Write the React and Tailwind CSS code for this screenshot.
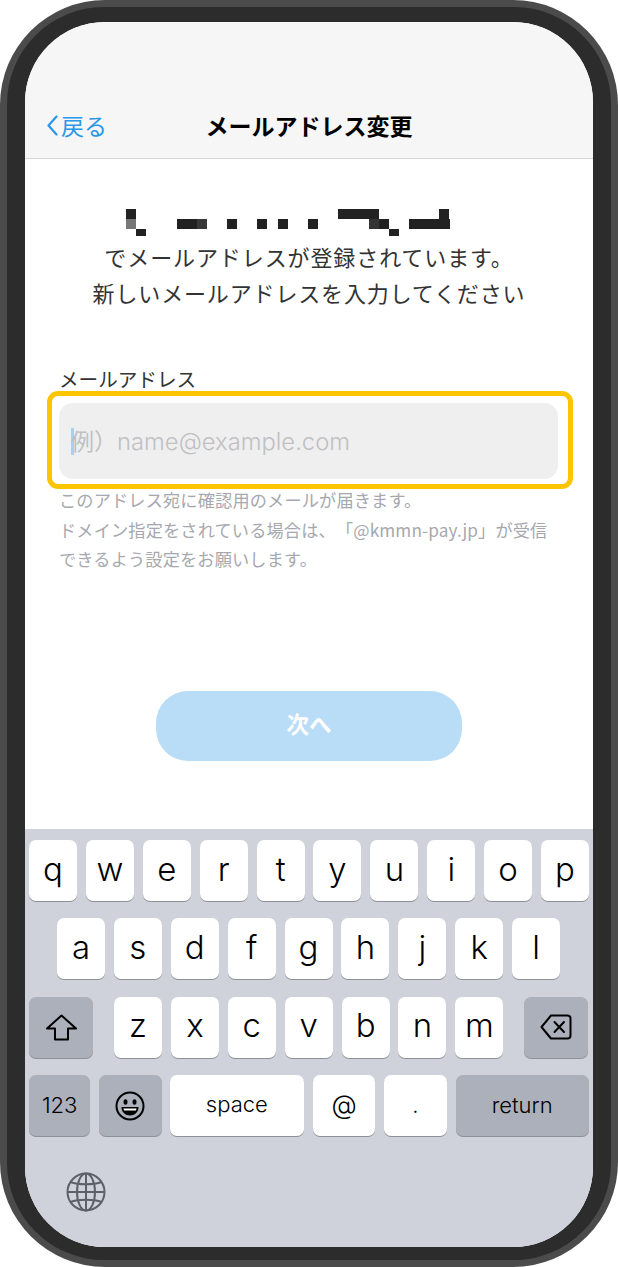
import React from 'react';

const jp = "font-['Noto_Sans_CJK_JP',sans-serif]";
const keyFont = "font-['Inter','Noto_Sans_CJK_JP',sans-serif]";

function Mosaic() {
  // the censored address, as the mosaic blocks
  const blocks = [
    [0, 0, 10, 10, '#222'], [0, 10, 10, 10, '#777'], [10, 20, 10, 7, '#222'],
    [51, 10, 20, 10, '#222'], [71, 10, 10, 10, '#383838'],
    [101, 10, 10, 10, '#222'], [131, 10, 10, 10, '#222'], [152, 10, 10, 10, '#222'], [182, 10, 10, 10, '#222'],
    [212, 0, 41, 10, '#222'], [243, 10, 10, 10, '#333'], [253, 10, 10, 10, '#222'], [263, 20, 10, 7, '#222'],
    [283, 10, 41, 10, '#222'], [313, 0, 10, 10, '#222'],
  ];
  return (
    <svg width="324" height="27" viewBox="0 0 324 27" className="ml-[101px] block">
      {blocks.map((b, i) => (
        <rect key={i} x={b[0]} y={b[1]} width={b[2]} height={b[3]} fill={b[4]} />
      ))}
    </svg>
  );
}

function Key({ children, className = 'w-[48px]' }) {
  return (
    <div className={`h-[61px] shrink-0 rounded-[7px] bg-white shadow-[0_1px_0_#8e9096] flex items-center justify-center text-black ${className}`}>
      {children}
    </div>
  );
}

function DarkKey({ children, className }) {
  return (
    <div className={`h-[61px] shrink-0 rounded-[7px] bg-[#abb0bb] shadow-[0_1px_0_#8e9096] flex items-center justify-center text-black ${className}`}>
      {children}
    </div>
  );
}

function Letter({ c }) {
  return (
    <Key>
      <span className="text-[33px] font-light leading-none -mt-[3px]">{c}</span>
    </Key>
  );
}

function ShiftIcon() {
  return (
    <svg width="31" height="27" viewBox="0 0 31 27" fill="none" stroke="#000" strokeWidth="2" strokeLinejoin="round">
      <path d="M15.5 1.5 L30 14.5 H22 V25.5 H9 V14.5 H1 Z" />
    </svg>
  );
}

function DeleteIcon() {
  return (
    <svg width="32" height="26" viewBox="0 0 32 26" fill="none" stroke="#000" strokeWidth="2" strokeLinejoin="round" strokeLinecap="round">
      <path d="M11 1.5 H27.5 Q30.5 1.5 30.5 4.5 V21.5 Q30.5 24.5 27.5 24.5 H11 L1.5 13 Z" />
      <path d="M14.5 8 L24 18 M24 8 L14.5 18" />
    </svg>
  );
}

function EmojiIcon() {
  return (
    <svg width="30" height="30" viewBox="0 0 30 30" fill="none">
      <circle cx="15" cy="15" r="13.5" stroke="#000" strokeWidth="2" />
      <ellipse cx="10.5" cy="11" rx="2" ry="2.8" fill="#000" />
      <ellipse cx="19.5" cy="11" rx="2" ry="2.8" fill="#000" />
      <path d="M6.5 16 H23.5 C23.5 21.5 19.5 24.5 15 24.5 C10.5 24.5 6.5 21.5 6.5 16 Z" fill="#000" />
      <path d="M8.5 17.5 H21.5 L21 19.5 H9 Z" fill="#fff" />
    </svg>
  );
}

function GlobeIcon() {
  return (
    <svg width="40" height="40" viewBox="0 0 40 40" fill="none" stroke="#5c6068" strokeWidth="2">
      <circle cx="20" cy="20" r="18.5" />
      <ellipse cx="20" cy="20" rx="9" ry="18.5" />
      <path d="M20 1.5 V38.5 M1.5 20 H38.5" />
      <path d="M4.5 10 C12 13 28 13 35.5 10 M4.5 30 C12 27 28 27 35.5 30" />
    </svg>
  );
}

function Keyboard() {
  return (
    <div className={`h-[418px] bg-[#cfd2da] pt-[11px] ${keyFont}`}>
      <div className="flex gap-[8.9px] pl-[4px]">
        {'qwertyuiop'.split('').map((c) => <Letter key={c} c={c} />)}
      </div>
      <div className="flex gap-[8.9px] pl-[32px] mt-[17.4px]">
        {'asdfghjkl'.split('').map((c) => <Letter key={c} c={c} />)}
      </div>
      <div className="flex pl-[4px] mt-[17.4px]">
        <DarkKey className="w-[64px]"><ShiftIcon /></DarkKey>
        <div className="flex gap-[8.9px] ml-[21px]">
          {'zxcvbnm'.split('').map((c) => <Letter key={c} c={c} />)}
        </div>
        <DarkKey className="w-[64px] ml-[21px]"><DeleteIcon /></DarkKey>
      </div>
      <div className="flex pl-[4px] mt-[17.4px]">
        <DarkKey className="w-[61.3px] text-[22px] font-light">123</DarkKey>
        <DarkKey className="w-[62.4px] ml-[9px]"><EmojiIcon /></DarkKey>
        <Key className="w-[134.3px] ml-[8px]"><span className="text-[22px] font-light -mt-[3px]">space</span></Key>
        <Key className="w-[61.7px] ml-[9.3px]"><span className="text-[26px] font-light -mt-[3px]">@</span></Key>
        <Key className="w-[63px] ml-[9px]"><span className="text-[22px] font-light">.</span></Key>
        <DarkKey className="w-[133px] ml-[8.7px] text-[22px] font-light">return</DarkKey>
      </div>
      <div className="pl-[41px] mt-[36px]">
        <GlobeIcon />
      </div>
    </div>
  );
}

export default function App() {
  return (
    <div className="h-[1267px] w-[618px] bg-white">
      <div className="h-full rounded-[105px] bg-[#4b4b4b] p-[7px]">
        <div className="h-full rounded-[97px] bg-[#2c2c2c] pt-[15px] pb-[13px] px-[18px]">
          <div className="h-full rounded-[80px] overflow-hidden bg-white flex flex-col">
            {/* Nav bar */}
            <header className={`relative h-[137px] shrink-0 bg-[#f6f6f7] border-b border-[#d6d6d8] flex items-end pb-[17px] justify-center ${jp}`}>
              <div className="absolute left-[22px] bottom-[17px] flex items-center gap-[3px] text-[#2b97e8]">
                <svg width="11" height="21" viewBox="0 0 11 21" fill="none" stroke="#2b97e8" strokeWidth="2.2" strokeLinecap="round" strokeLinejoin="round">
                  <path d="M9.5 1.5 L1.5 10.5 L9.5 19.5" />
                </svg>
                <span className="text-[23px] leading-[32px]">戻る</span>
              </div>
              <h1 className="text-[23px] font-bold leading-[32px] text-black">メールアドレス変更</h1>
            </header>

            {/* Body */}
            <main className={`flex-1 pt-[50px] ${jp}`}>
              <Mosaic />
              <p className="mt-[2px] text-center text-[22px] leading-[36px] text-[#333]">
                <span className="tracking-[0.9px]">でメールアドレスが登録されています。</span><br />
                <span className="tracking-[0.85px]">新しいメールアドレスを入力してください</span>
              </p>
              <div className="mt-[55px] pl-[34px] text-[19.6px] leading-[28px] text-[#333]">メールアドレス</div>
              <div className="ml-[22px] mt-[-2px] w-[526px] h-[98px] rounded-[11px] border-[5px] border-[#fdc500] pl-[7px] pr-[10px] pt-[7px]">
                <div className="h-[76px] rounded-[14px] bg-[#efefef] flex items-center pl-[12px]">
                  <span className="w-[3px] h-[27px] bg-[#a8cff5] shrink-0" />
                  <span className="-ml-[3px] text-[23px] text-[#c0c0c2]">例）<span className="font-['Inter',sans-serif] text-[23.8px] font-light">name@example.com</span></span>
                </div>
              </div>
              <div className="mt-[-4px] pl-[34px] text-[17.2px] leading-[29.7px] tracking-[0.15px] text-[#a6a8ae] [text-spacing-trim:space-all]">
                <p>このアドレス宛に確認用のメールが届きます。</p>
                <p>ドメイン指定をされている場合は、「@kmmn-pay.jp」が受信</p>
                <p>できるよう設定をお願いします。</p>
              </div>
              <div className="mt-[117px] pl-[131px]">
                <button className="block w-[306px] h-[70px] rounded-[32px] bg-[#b9ddf6] text-white font-bold text-[22.5px] pb-[4px]">次へ</button>
              </div>
            </main>

            <Keyboard />
          </div>
        </div>
      </div>
    </div>
  );
}
